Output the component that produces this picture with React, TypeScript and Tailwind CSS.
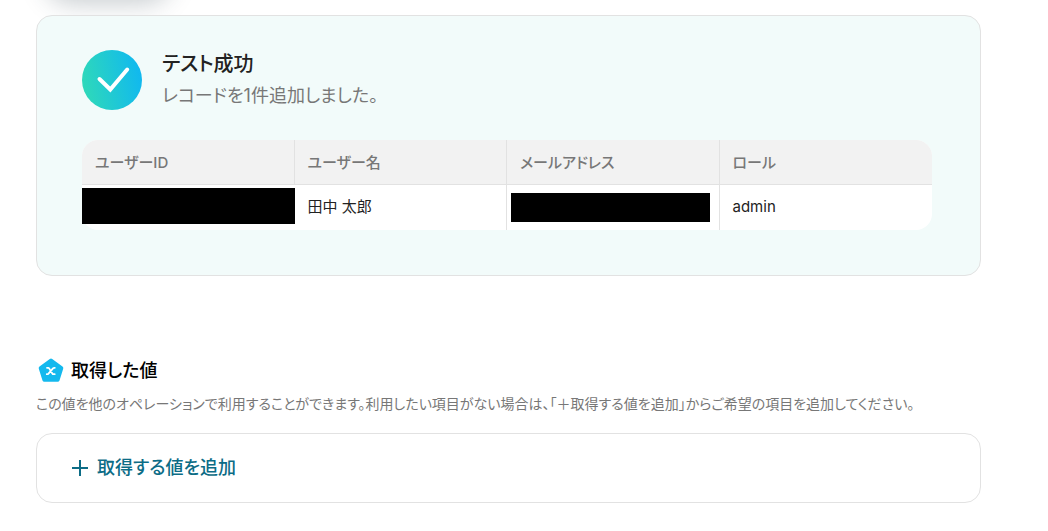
type Column = { key: string; label: string };

const columns: Column[] = [
  { key: "id", label: "ユーザーID" },
  { key: "name", label: "ユーザー名" },
  { key: "email", label: "メールアドレス" },
  { key: "role", label: "ロール" },
];

function SuccessIcon() {
  return (
    <svg className="size-15 shrink-0" viewBox="0 0 60 60" fill="none" aria-hidden="true">
      <defs>
        <linearGradient id="success-fill" x1="0" y1="36" x2="60" y2="24" gradientUnits="userSpaceOnUse">
          <stop stopColor="#2fd9b9" />
          <stop offset="1" stopColor="#10b8f0" />
        </linearGradient>
      </defs>
      <circle cx="30" cy="30" r="30" fill="url(#success-fill)" />
      <path d="M17.5 29L28.3 39.5L45.2 19.5" stroke="white" strokeWidth="4" strokeLinecap="round" />
    </svg>
  );
}

function ValueIcon() {
  return (
    <svg className="size-[26px] shrink-0" viewBox="0 0 26 26" fill="none" aria-hidden="true">
      <path
        d="M13 2.5L23.3 10.2L19.6 21.8H6.4L2.7 10.2Z"
        fill="#14b9ee"
        stroke="#14b9ee"
        strokeWidth="4"
        strokeLinejoin="round"
      />
      <path
        d="M9 9.8H10.2C10.8 9.8 11 10.1 11.3 10.6L14.3 15.4C14.6 15.9 14.9 16.2 15.5 16.2H16.7M16.8 9.8H16.2C15.7 9.8 15.4 10 15 10.4L10.5 15.6C10.1 16 9.8 16.2 9.3 16.2H8.8"
        stroke="white"
        strokeWidth="1.8"
        strokeLinecap="round"
      />
    </svg>
  );
}

function ResultTable() {
  return (
    <table className="w-full table-fixed border-separate border-spacing-0 rounded-2xl bg-white text-left text-[15px] leading-6 text-[#222222]">
      <thead className="text-[#777777]">
        <tr>
          {columns.map((column) => (
            <th
              key={column.key}
              scope="col"
              className="h-[45px] border-r border-b border-[#e2e2e2] bg-[#f2f2f2] px-[13px] pt-0.5 font-medium first:rounded-tl-2xl last:rounded-tr-2xl last:border-r-0"
            >
              {column.label}
            </th>
          ))}
        </tr>
      </thead>
      <tbody>
        <tr>
          <td className="h-[45px] p-0 pt-[3px] align-top">
            <div className="h-9 bg-black" />
          </td>
          <td className="border-r border-[#e2e2e2] px-[13px] pb-0.5">田中 太郎</td>
          <td className="border-r border-[#e2e2e2] pr-[9px] pl-1">
            <div className="h-[29px] bg-black" />
          </td>
          <td className="px-[13px] pb-0.5">admin</td>
        </tr>
      </tbody>
    </table>
  );
}

export default function App() {
  return (
    <main className="overflow-hidden bg-white pr-[67px] pb-7 pl-9 font-['Inter','Noto_Sans_CJK_JP',sans-serif] [font-feature-settings:'palt']">
      <div className="-mt-12 ml-3 h-12 w-30 rounded-full shadow-[0_0_24px_4px_rgba(40,60,70,0.25)]" />

      <section className="relative mt-[15px] rounded-2xl border border-[#e2e2e2] bg-[#f2fbfa] pt-8 pr-12 pb-[45px] pl-[45px]">
        <div className="mb-7 flex items-center gap-5">
          <SuccessIcon />
          <div>
            <h2 className="text-xl leading-8 font-medium text-[#222222]">テスト成功</h2>
            <p className="text-lg leading-8 text-[#777777]">レコードを1件追加しました。</p>
          </div>
        </div>
        <ResultTable />
      </section>

      <section className="mt-[81px]">
        <div className="flex items-center gap-[7px] pl-0.5">
          <ValueIcon />
          <h2 className="text-lg leading-7 font-medium text-black">取得した値</h2>
        </div>
        <p className="mt-[7px] text-sm leading-6 text-[#777777]">
          この値を他のオペレーションで利用することができます。利用したい項目がない場合は、「＋取得する値を追加」からご希望の項目を追加してください。
        </p>
        <div className="mt-[17px] rounded-2xl border border-[#e2e2e2] px-[35px] py-5">
          <button type="button" className="flex items-center gap-[9px] text-lg leading-7 font-medium text-[#0c6c86]">
            <svg className="size-4" viewBox="0 0 16 16" fill="none" aria-hidden="true">
              <path d="M8 0V16M0 8H16" stroke="currentColor" strokeWidth="2" />
            </svg>
            取得する値を追加
          </button>
        </div>
      </section>
    </main>
  );
}
